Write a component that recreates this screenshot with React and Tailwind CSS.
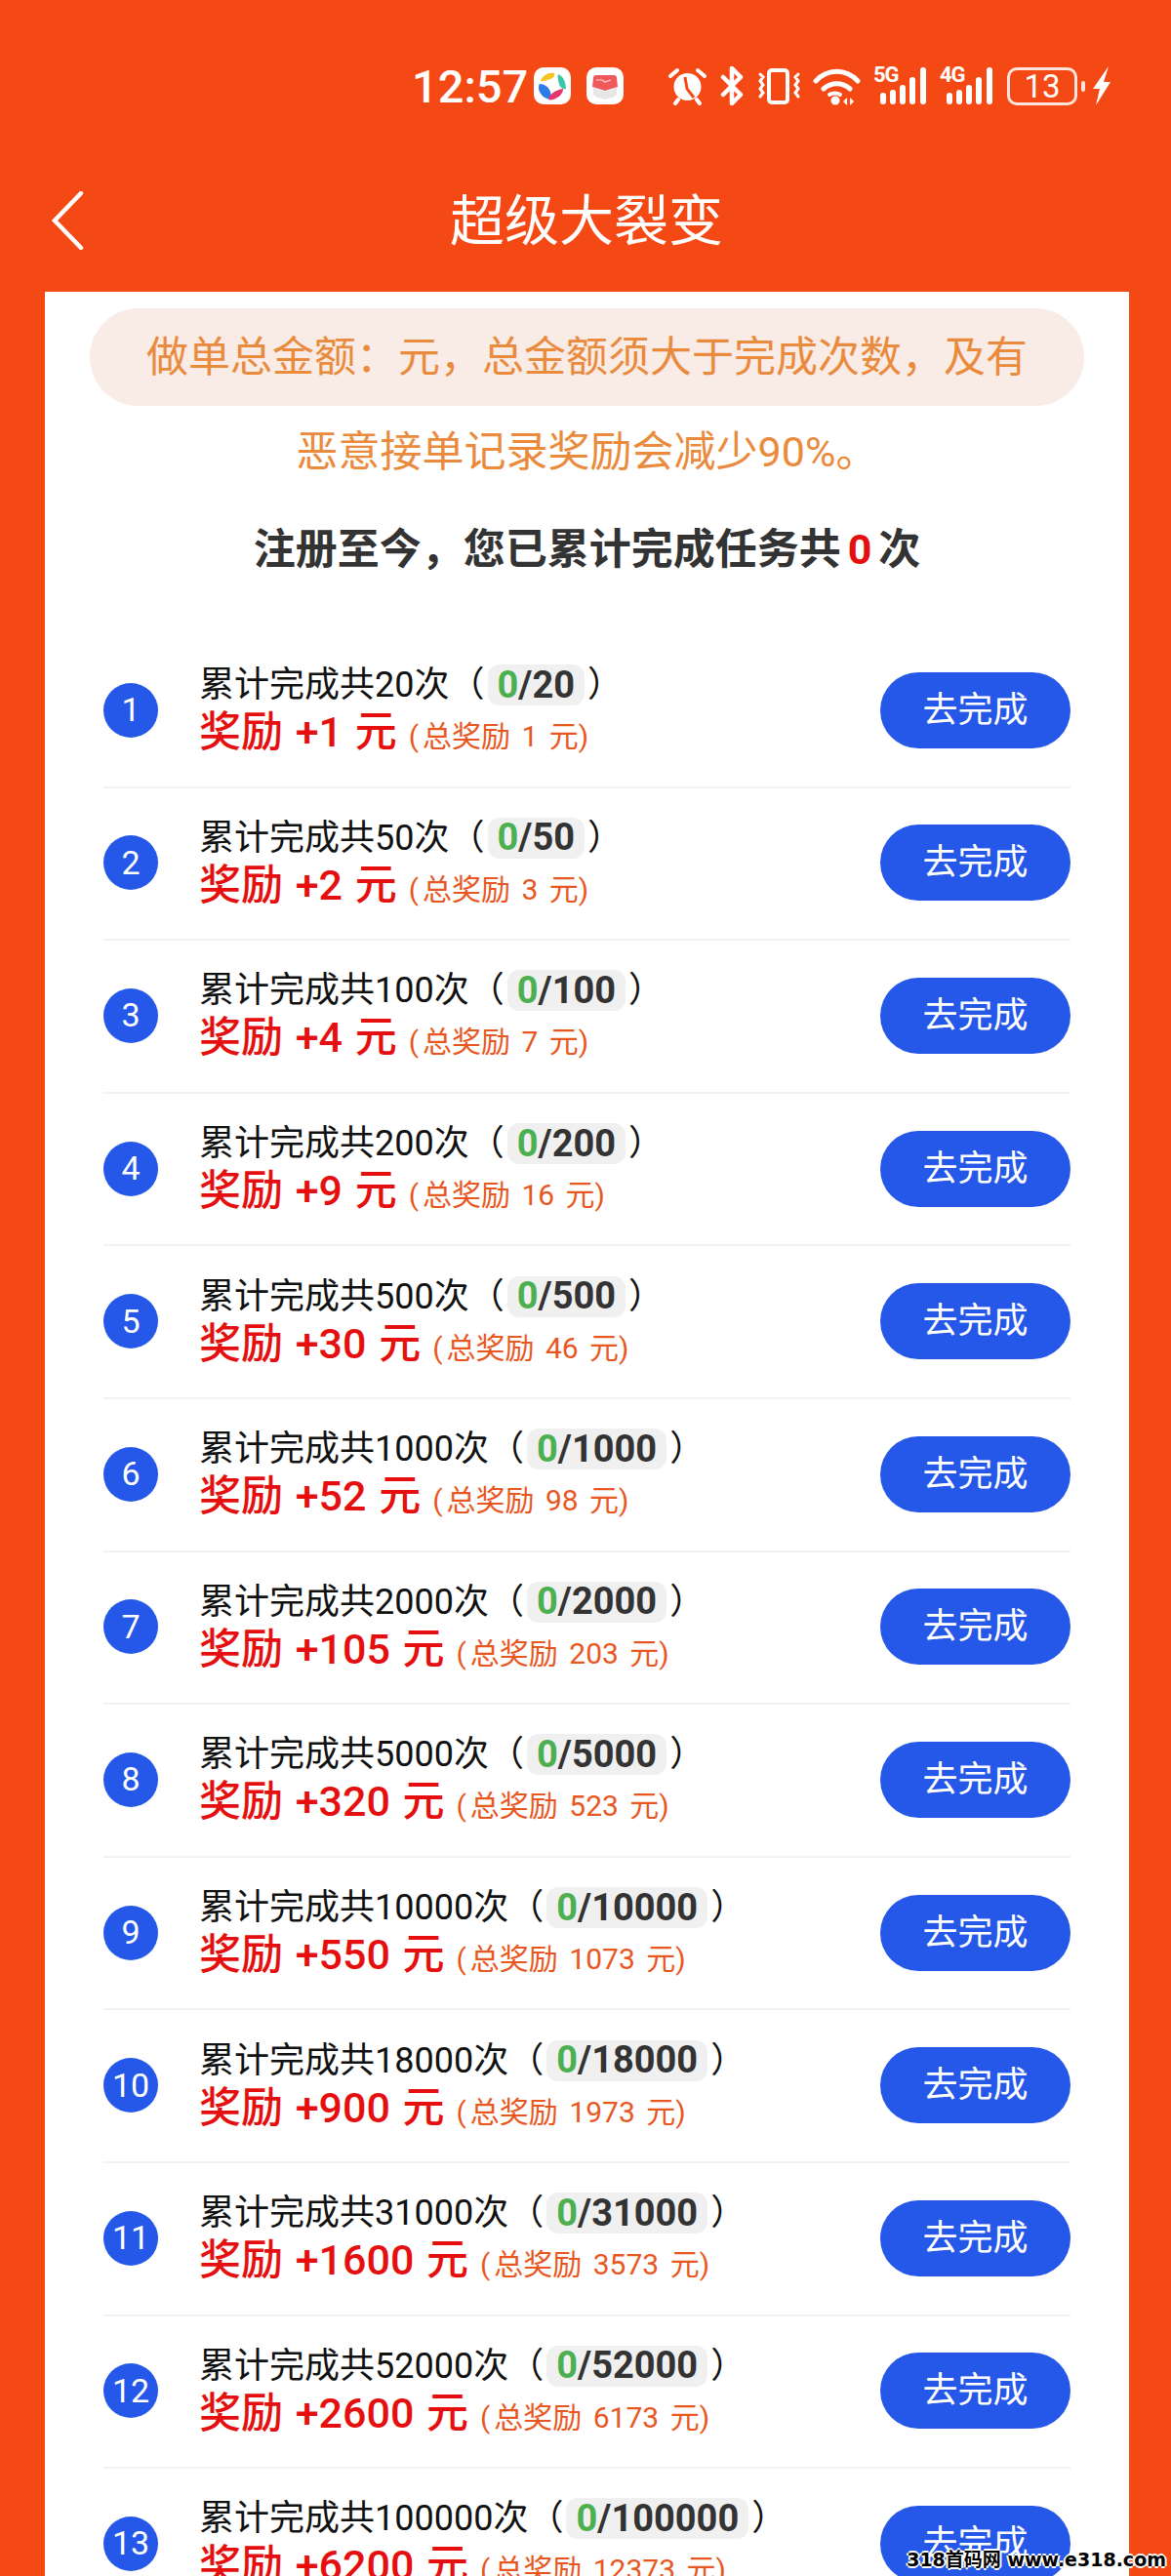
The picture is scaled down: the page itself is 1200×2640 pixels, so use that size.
import React from 'react';

const rows = [
    {n: 1, target: 20, reward: 1, total: 1},
    {n: 2, target: 50, reward: 2, total: 3},
    {n: 3, target: 100, reward: 4, total: 7},
    {n: 4, target: 200, reward: 9, total: 16},
    {n: 5, target: 500, reward: 30, total: 46},
    {n: 6, target: 1000, reward: 52, total: 98},
    {n: 7, target: 2000, reward: 105, total: 203},
    {n: 8, target: 5000, reward: 320, total: 523},
    {n: 9, target: 10000, reward: 550, total: 1073},
    {n: 10, target: 18000, reward: 900, total: 1973},
    {n: 11, target: 31000, reward: 1600, total: 3573},
    {n: 12, target: 52000, reward: 2600, total: 6173},
    {n: 13, target: 100000, reward: 6200, total: 12373},
];

const font = "font-['Roboto','Noto_Sans_CJK_SC',sans-serif]";

const Signal = ({label}) => (
    <div className="relative w-[56px] h-[40px]">
        <span className="absolute left-0 top-[-2px] text-[22px] leading-[22px] font-bold tracking-[-1px] text-white">{label}</span>
        <svg viewBox="0 0 56 40" className="w-[56px] h-[40px]" fill="white">
            <rect x="7" y="27" width="6" height="12" rx="3" />
            <rect x="17" y="24" width="6" height="15" rx="3" />
            <rect x="27" y="19" width="6" height="20" rx="3" />
            <rect x="37" y="11" width="6" height="28" rx="3" />
            <rect x="48" y="1" width="6" height="38" rx="3" />
        </svg>
    </div>
);

const StatusBar = () => (
    <div className="h-[66px] mt-[55px] flex items-center pl-[422px] text-white">
        <span className="text-[47px] leading-none w-[125px] font-medium">12:57</span>
        {/* app icons */}
        <svg viewBox="0 0 38 38" className="w-[38px] h-[38px]">
            <rect width="38" height="38" rx="10" fill="white" />
            <path d="M7 14C9 8 15 5 21 6c1 3-1 5-4 6-4 1-7 3-10 2z" fill="#f7c325" />
            <path d="M25 7c5 2 8 8 8 15-3 1-6-1-7-5-1-3-2-7-1-10z" fill="#39c7a5" />
            <path d="M6 17c5 0 9 3 11 8 1 3 1 6 0 8-6-1-11-5-12-11 0-2 0-4 1-5z" fill="#2f7be8" />
            <path d="M15 33c1-5 7-10 15-11 0 3-2 7-6 9-3 2-6 3-9 2z" fill="#e8356b" />
        </svg>
        <svg viewBox="0 0 38 38" className="w-[38px] h-[38px] ml-[16px]">
            <rect width="38" height="38" rx="10" fill="white" />
            <path d="M7 11q0-3 3-3h18q3 0 3 3l1 9-13 4-13-4z" fill="#ee5a5c" />
            <path d="M10 13h6l3 2 6-2" stroke="#fbd5d5" strokeWidth="1.2" fill="none" />
            <path d="M7 21l12 4v8l-10-3q-2-1-2-3zM31 21l-12 4v8l10-3q2-1 2-3z" fill="#e6e6e6" />
        </svg>
        <div className="flex items-center ml-[46px]">
            {/* alarm */}
            <svg viewBox="0 0 39 40" className="w-[39px] h-[40px]">
                <circle cx="19.5" cy="21" r="14" fill="white" />
                <path d="M17 11l2 12 7 9" stroke="#f44914" strokeWidth="3" fill="none" />
                <path d="M2 10l7-6M37 10l-7-6" stroke="white" strokeWidth="4" strokeLinecap="round" />
                <path d="M7 38l3-4M32 38l-3-4" stroke="white" strokeWidth="4" strokeLinecap="round" />
            </svg>
            {/* bluetooth */}
            <svg viewBox="0 0 24 40" className="w-[24px] h-[40px] ml-[14px]" fill="none" stroke="white" strokeWidth="4.5" strokeLinejoin="round" strokeLinecap="round">
                <path d="M3 11l18 18-9 9V2l9 9L3 29" />
            </svg>
            {/* vibrate */}
            <svg viewBox="0 0 47 40" className="w-[47px] h-[40px] ml-[13px]" fill="none" stroke="white" strokeWidth="4" strokeLinecap="round">
                <rect x="13" y="4" width="19" height="33" rx="3" />
                <path d="M4 8l3 3-3 4 3 4-3 4 3 4-3 4M43 8l-3 3 3 4-3 4 3 4-3 4 3 4" strokeWidth="3" />
            </svg>
            {/* wifi */}
            <svg viewBox="0 0 49 40" className="w-[49px] h-[40px] ml-[11px]" fill="none" stroke="white" strokeWidth="5" strokeLinecap="round">
                <path d="M3 15c12-13 31-13 43 0M11 23c8-7 19-7 27 0" />
                <path d="M17 29c3-2 8-2 11 0" strokeWidth="4" />
                <circle cx="23" cy="35" r="4.5" fill="white" stroke="none" />
                <path d="M35 32l-4 4 4 4zM38 32l4 4-4 4z" fill="white" stroke="none" />
            </svg>
            <div className="ml-[13px]"><Signal label="5G" /></div>
            <div className="ml-[12px]"><Signal label="4G" /></div>
            {/* battery */}
            <div className="ml-[13px] w-[72px] h-[39px] rounded-[10px] border-[3px] border-white/85 flex items-center justify-center text-[33px] leading-none">13</div>
            <div className="ml-[4px] w-[4px] h-[11px] rounded-full bg-white/85"></div>
            <svg viewBox="0 0 18 40" className="w-[18px] h-[40px] ml-[8px]" fill="white">
                <path d="M16 0L0 23h7L3 40l15-24h-7z" />
            </svg>
        </div>
    </div>
);

const TaskRow = ({row}) => (
    <div className="h-[156.6px] flex items-center border-b-2 border-[#f2f2f2] shrink-0 pb-[1px]">
        <div className="w-[56px] h-[56px] rounded-full bg-[#2558e8] text-white text-[34px] flex items-center justify-center shrink-0">{row.n}</div>
        <div className="ml-[42px] flex-1 min-w-0 mb-[10px]">
            <div className="flex items-center h-[42px] text-[36px] text-[#111]">
                <span>累计完成共{row.target}次{'\uFF08'}</span>
                <span className="ml-[3px] h-[42px] px-[10px] rounded-[12px] bg-[#f0f0f0] text-[38px] font-bold flex items-center text-[#333]">
                    <span className="text-[#4caf50]">0</span>/{row.target}
                </span>
                <span className="ml-[3px]">{'\uFF09'}</span>
            </div>
            <div className="flex items-baseline -mt-[5px] h-[46px]">
                <span className="text-[43px] font-medium text-[#e60f0f] [word-spacing:2px]">奖励 +{row.reward} 元</span>
                <span className="ml-[12px] text-[30px] text-[#e8571f] [word-spacing:4px]">
                    <span className="mr-[4px]">(</span>总奖励 {row.total} 元)
                </span>
            </div>
        </div>
        <div className="w-[195px] h-[78px] rounded-full bg-[#2558e8] text-white text-[36px] flex items-center justify-center shrink-0">去完成</div>
    </div>
);

const App = () => {
    return (
        <div className={`relative h-[2640px] overflow-hidden bg-[#f44914] ${font}`}>
            <StatusBar />

            {/* Title bar */}
            <div className="relative h-[178px] flex items-center justify-center pt-[34px] pl-[2px]">
                <svg viewBox="0 0 34 60" className="absolute left-[52px] top-[75px] w-[34px] h-[60px]" fill="none" stroke="white" strokeWidth="4.5" strokeLinecap="round">
                    <path d="M31 2L4 30l27 28" />
                </svg>
                <span className="text-[56px] text-white leading-none">超级大裂变</span>
            </div>

            {/* Card */}
            <div className="mx-[46px] w-[1111px] bg-white pt-[17px] h-full">
                <div className="mx-[46px] h-[100px] rounded-[50px] bg-[#f9ebe6] flex items-center justify-center text-[43px] text-[#ea8a3d]">
                    {'做单总金额\uFF1A元\uFF0C总金额须大于完成次数\uFF0C及有'}
                </div>
                <div className="mt-[17px] text-center text-[43px] leading-[60px] text-[#ea8a3d]">恶意接单记录奖励会减少90%。</div>
                <div className="mt-[40px] text-center text-[43px] leading-[60px] font-bold text-[#333]">
                    {'注册至今\uFF0C您已累计完成任务共'}<span className="mx-[7px] text-[#e60f0f]">0</span>次
                </div>
                <div className="mt-[58px] mx-[60px] flex flex-col">
                    {rows.map((row) => <TaskRow key={row.n} row={row} />)}
                </div>
            </div>

            {/* Watermark */}
            <div className="absolute right-[5px] bottom-[5px] text-[19px] leading-[24px] font-['DejaVu_Sans','Noto_Sans_CJK_SC',sans-serif] font-bold text-black [text-shadow:-2px_0_0_#fff,2px_0_0_#fff,0_-2px_0_#fff,0_2px_0_#fff]">
                318首码网 www.e318.com
            </div>
        </div>
    );
};

export default App;
